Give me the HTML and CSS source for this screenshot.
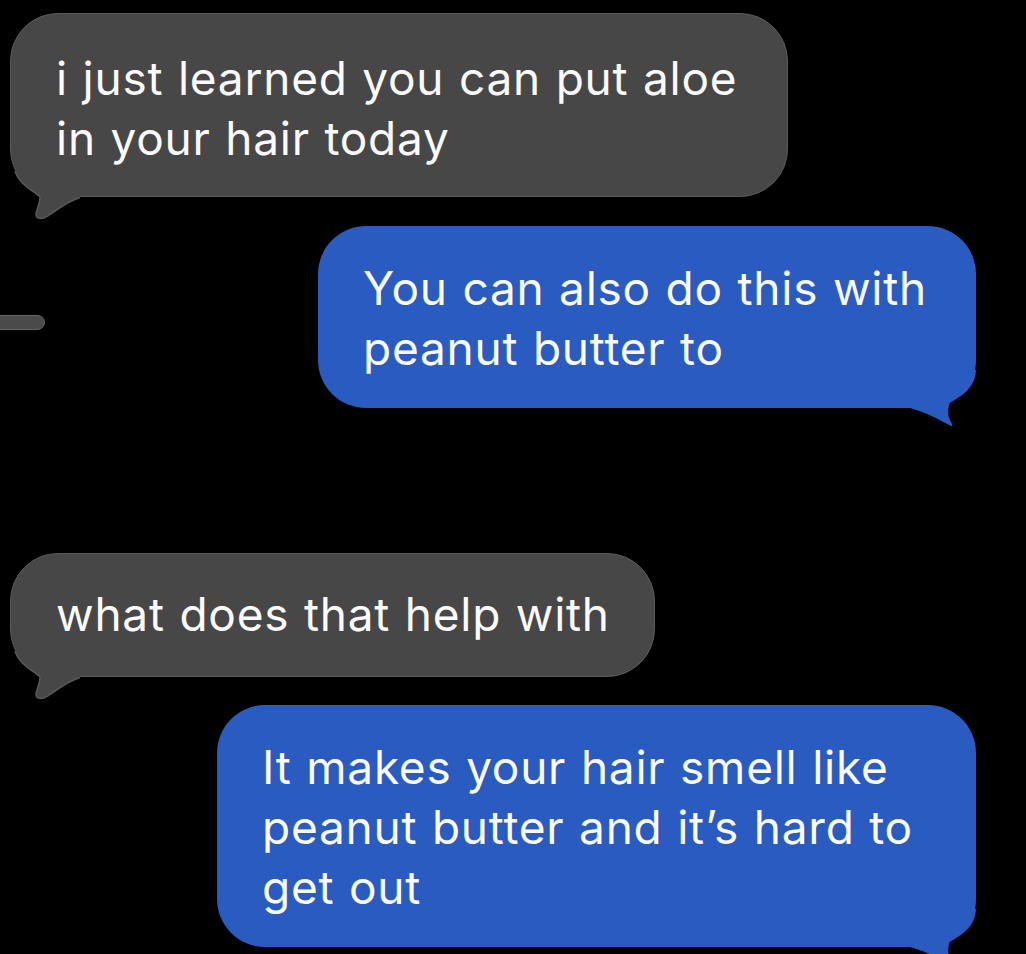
FILE: index.html
```html
<!DOCTYPE html>
<html lang="en">
<head>
<meta charset="utf-8">
<title>Messages</title>
<link rel="stylesheet" href="styles.css">
</head>
<body>
<main class="thread">
  <div class="row row-in row-first">
    <div class="bubble bubble-in bubble-1">
      <p class="text">i just learned you can put aloe<br>in your hair today</p>
      <svg class="tail tail-in" width="80" height="52" viewBox="0 0 80 52" aria-hidden="true">
        <path class="tail-fill" d="M5 0 C10 15 26 21 30 26 C30 33 26 40 26 43 C26 48 32 49 38 45 C48 38 58 30 70 26.5 L70 0 Z"/>
        <path class="tail-edge" d="M5 0 C10 15 26 21 30 26 C30 33 26 40 26 43 C26 48 32 49 38 45 C48 38 58 30 70 26.5"/>
      </svg>
    </div>
  </div>

  <div class="row row-out row-second">
    <span class="peek"></span>
    <div class="bubble bubble-out bubble-2">
      <p class="text">You can also do this with<br>peanut butter to</p>
      <svg class="tail tail-out" width="75" height="65" viewBox="0 0 75 65" aria-hidden="true">
        <path d="M71 5 C70 25 53 33 45 37 C42 45 43 52 46 57 C48 61 48 62 44 60 C33 54 20 47 5 43 L5 5 Z"/>
      </svg>
    </div>
  </div>

  <div class="row row-in row-third">
    <div class="bubble bubble-in bubble-3">
      <p class="text">what does that help with</p>
      <svg class="tail tail-in" width="80" height="52" viewBox="0 0 80 52" aria-hidden="true">
        <path class="tail-fill" d="M5 0 C10 15 26 21 30 26 C30 33 26 40 26 43 C26 48 32 49 38 45 C48 38 58 30 70 26.5 L70 0 Z"/>
        <path class="tail-edge" d="M5 0 C10 15 26 21 30 26 C30 33 26 40 26 43 C26 48 32 49 38 45 C48 38 58 30 70 26.5"/>
      </svg>
    </div>
  </div>

  <div class="row row-out row-fourth">
    <div class="bubble bubble-out bubble-4">
      <p class="text">It makes your hair smell like<br>peanut butter and it’s hard to<br>get out</p>
      <svg class="tail tail-out" width="75" height="65" viewBox="0 0 75 65" aria-hidden="true">
        <path d="M71 5 C70 25 53 33 45 37 C42 45 43 52 46 57 C48 61 48 62 44 60 C33 54 20 47 5 43 L5 5 Z"/>
      </svg>
    </div>
  </div>
</main>
</body>
</html>
```

FILE: styles.css
```css
html, body {
  margin: 0;
  padding: 0;
  background: #000;
  overflow: hidden;
  height: 954px;
}

.thread {
  display: flex;
  flex-direction: column;
  font-family: "Inter", "Helvetica Neue", "Liberation Sans", Arial, sans-serif;
  color: #fafafa;
}

.row {
  display: flex;
  align-items: flex-start;
}

.row-in {
  justify-content: flex-start;
  padding-left: 10px;
}

.row-out {
  justify-content: flex-end;
  padding-right: 50px;
}

.row-first { margin-top: 13px; }
.row-second {
  margin-top: 29px;
  justify-content: space-between;
  align-items: center;
}
.row-third { margin-top: 145px; }
.row-fourth { margin-top: 28px; }

.bubble {
  position: relative;
  box-sizing: border-box;
  border-radius: 48px;
}

.bubble-in {
  background: #474747;
  border: 1.5px solid #5b5b5b;
  padding: 0 0 0 45px;
}

.bubble-out {
  background: #2a5bc1;
  padding: 0 0 0 45px;
}

.bubble-1 { width: 778px; height: 184px; padding-top: 34px; }
.bubble-2 { width: 658px; height: 182px; padding-top: 32px; }
.bubble-3 { width: 645px; height: 124px; padding-top: 30px; }
.bubble-4 { width: 759px; height: 242px; padding-top: 32px; }

.text {
  margin: 0;
  font-size: 46px;
  line-height: 60px;
  white-space: nowrap;
  letter-spacing: 0.75px;
  word-spacing: 1px;
}

.peek {
  display: block;
  width: 55px;
  height: 15px;
  margin-left: -10px;
  margin-top: 10px;
  box-sizing: border-box;
  background: #4a4a4a;
  border: 1px solid #666;
  border-radius: 8px;
}

.tail {
  position: absolute;
  overflow: visible;
}

.tail-in {
  left: -1.5px;
  bottom: -26.5px;
}

.tail-fill { fill: #474747; }
.tail-edge {
  fill: none;
  stroke: #5b5b5b;
  stroke-width: 1.5;
}

.tail-out {
  right: -4px;
  bottom: -22px;
}
.tail-out path { fill: #2a5bc1; }
```
